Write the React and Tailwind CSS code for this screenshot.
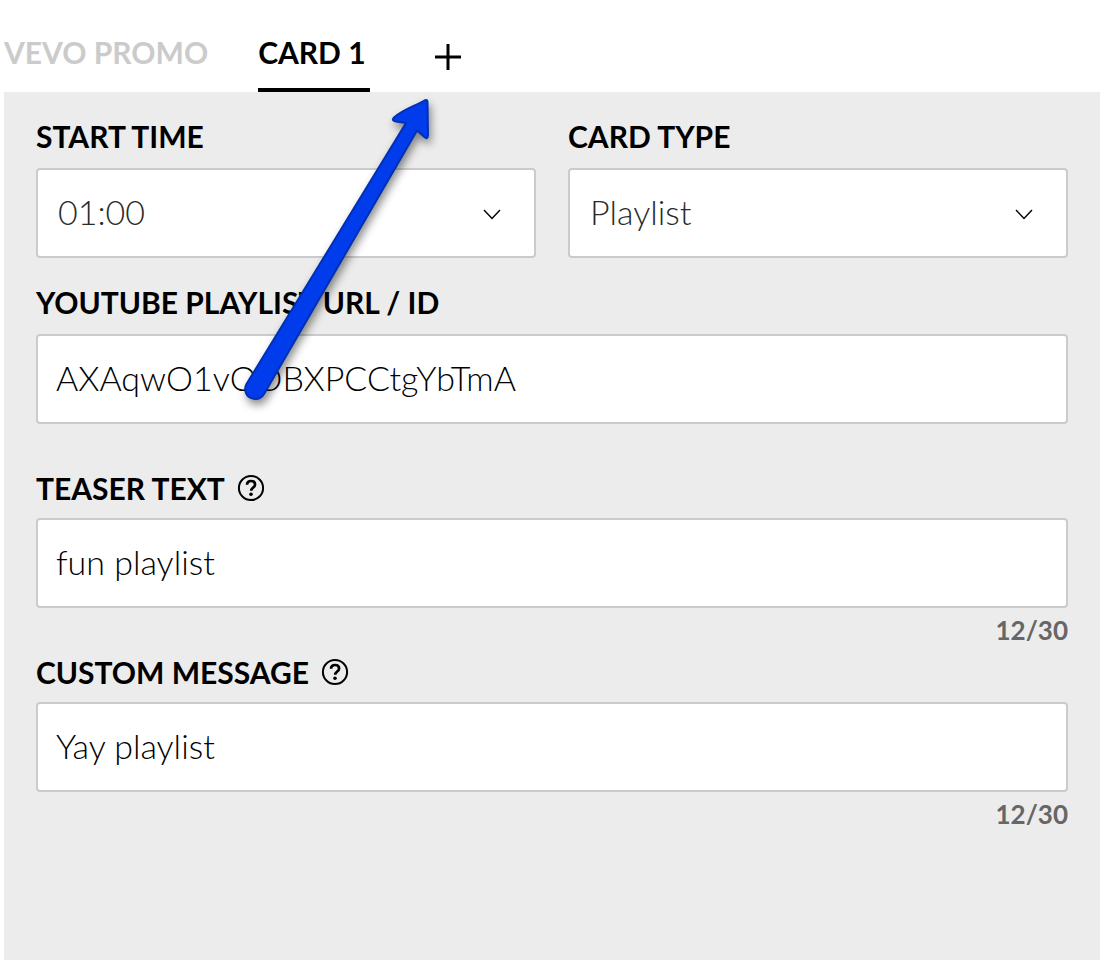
import { useState } from "react";

const labelClass = "text-[30px] leading-8 font-bold";
const fieldClass =
  "h-[90px] w-full rounded-sm border-2 border-[#cbcbcb] bg-white pb-1 text-[34px] font-light outline-none";

const HelpIcon = () => (
  <svg className="size-7 shrink-0" viewBox="0 0 28 28" fill="none" stroke="currentColor" strokeWidth="2">
    <circle cx="14" cy="14" r="12.1" />
    <path d="M10 10.8c.1-2.4 1.8-3.8 4.1-3.8 2.3 0 4 1.3 4 3.4 0 3-3.9 3.1-3.9 6.3" strokeWidth="2.7" />
    <circle cx="14" cy="20.3" r="1.8" fill="currentColor" stroke="none" />
  </svg>
);

const SelectField = ({ id, label, value, onChange, options }) => (
  <div className="flex flex-1 flex-col gap-4">
    <label htmlFor={id} className={labelClass}>{label}</label>
    <div className="relative">
      <select
        id={id}
        value={value}
        onChange={(e) => onChange(e.target.value)}
        className={`${fieldClass} appearance-none px-5 text-[#2a2a2a]`}
      >
        {options.map((option) => (
          <option key={option}>{option}</option>
        ))}
      </select>
      <svg
        className="pointer-events-none absolute top-10 right-8.5 h-3 w-5"
        viewBox="0 0 20 12"
        fill="none"
        stroke="black"
        strokeWidth="1.4"
      >
        <path d="M2 2l8 8.5 8-8.5" />
      </svg>
    </div>
  </div>
);

const CountedField = ({ id, label, value, onChange, max }) => (
  <div className="flex flex-col">
    <div className="mb-3.5 flex items-center gap-3">
      <label htmlFor={id} className={labelClass}>{label}</label>
      <button type="button" aria-label={`Help for ${label}`}>
        <HelpIcon />
      </button>
    </div>
    <input
      id={id}
      type="text"
      value={value}
      maxLength={max}
      onChange={(e) => onChange(e.target.value)}
      className={`${fieldClass} px-4.5`}
    />
    <span className="mt-2 text-right text-[26px] leading-7 font-bold text-[#666]">
      {value.length}/{max}
    </span>
  </div>
);

// Arrow drawn over the form, pointing at the add button
const PointerArrow = () => (
  <svg
    className="pointer-events-none absolute -top-2 left-[226px] h-[340px] w-[220px] drop-shadow-[2px_5px_4px_rgba(0,0,0,0.45)]"
    viewBox="230 84 220 340"
    aria-hidden="true"
  >
    <path
      d="M424.5 100.5Q427.5 99 427.5 102L428 135.5Q427.5 140 424.5 137L417 130.5 264 394A10 10 0 0 1 246.5 384L406 123 396 121.5Q391 120.5 394 117.5C402 110 415 106 424.5 100.5Z"
      fill="#003cec"
      stroke="#0030b4"
      strokeWidth="2"
      strokeLinejoin="round"
    />
  </svg>
);

const App = () => {
  const [startTime, setStartTime] = useState("01:00");
  const [cardType, setCardType] = useState("Playlist");
  const [playlistId, setPlaylistId] = useState("AXAqwO1vODBXPCCtgYbTmA");
  const [teaser, setTeaser] = useState("fun playlist");
  const [message, setMessage] = useState("Yay playlist");

  return (
    <div className="flex min-h-screen flex-col bg-white pt-5 pr-3.5 pb-2 pl-1 font-['Lato',sans-serif] text-black">
      <nav className="flex h-[72px] items-stretch text-[30px] leading-8 font-bold">
        <button type="button" className="flex items-start pt-4 text-[#cbcbcb]">VEVO PROMO</button>
        <button type="button" className="ml-12.5 flex items-start border-b-4 border-black pt-4 pr-1">CARD 1</button>
        <button type="button" aria-label="Add card" className="ml-16 self-center pt-0.5">
          <svg className="size-7" viewBox="0 0 28 28" stroke="black" strokeWidth="3">
            <path d="M14 1v26M1 14h26" />
          </svg>
        </button>
      </nav>

      <main className="relative flex-1 bg-[#ececec] px-8 pt-7">
        <div className="flex gap-8">
          <SelectField
            id="start-time"
            label="START TIME"
            value={startTime}
            onChange={setStartTime}
            options={["01:00", "02:00", "03:00"]}
          />
          <SelectField
            id="card-type"
            label="CARD TYPE"
            value={cardType}
            onChange={setCardType}
            options={["Playlist", "Video", "Channel"]}
          />
        </div>

        <div className="mt-7 flex flex-col gap-4">
          <label htmlFor="playlist-id" className={labelClass}>
            YOUTUBE PLAYLIST URL / ID
          </label>
          <input
            id="playlist-id"
            type="text"
            value={playlistId}
            onChange={(e) => setPlaylistId(e.target.value)}
            className={`${fieldClass} px-4.5`}
          />
        </div>

        <div className="mt-12 flex flex-col gap-3">
          <CountedField id="teaser" label="TEASER TEXT" value={teaser} onChange={setTeaser} max={30} />
          <CountedField id="message" label="CUSTOM MESSAGE" value={message} onChange={setMessage} max={30} />
        </div>

        <PointerArrow />
      </main>
    </div>
  );
};

export default App;
